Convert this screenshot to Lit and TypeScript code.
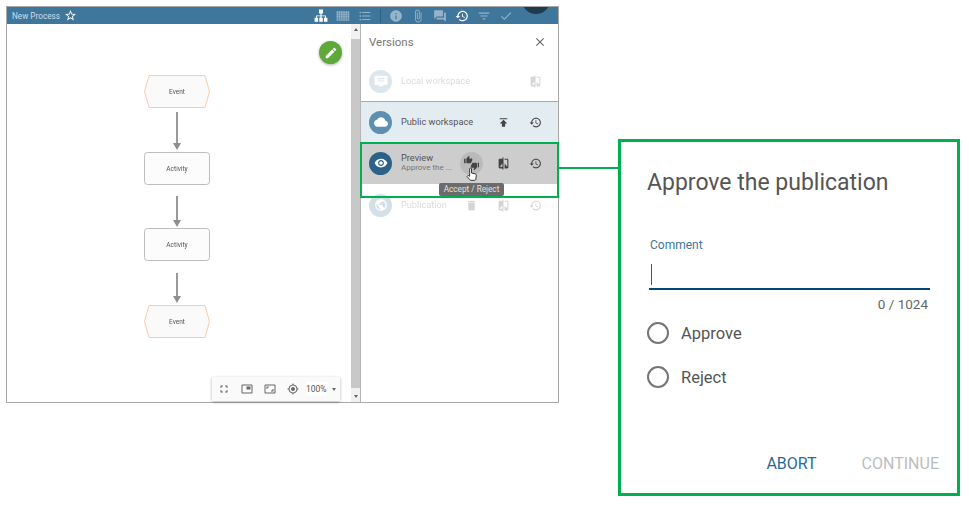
import { LitElement, html, css } from "lit";
import { customElement } from "lit/decorators.js";

const P = {
  star: "M22 9.24l-7.19-.62L12 2 9.19 8.63 2 9.24l5.46 4.73L5.82 21 12 17.27 18.18 21l-1.63-7.03L22 9.24zM12 15.4l-3.76 2.27 1-4.28-3.32-2.88 4.38-.38L12 6.1l1.71 4.04 4.38.38-3.32 2.88 1 4.28L12 15.4z",
  tree: "M8.5 1h7v6.5H13V11h7.5v4H23v7h-6v-7h2v-2.5h-6V15h2v7H9v-7h2v-2.5H5V15h2v7H1v-7h2.5v-4H11V7.5H8.5z",
  list: "M4 10.5c-.83 0-1.5.67-1.5 1.5s.67 1.5 1.5 1.5 1.5-.67 1.5-1.5-.67-1.5-1.5-1.5zm0-6c-.83 0-1.5.67-1.5 1.5S3.17 7.5 4 7.5 5.5 6.83 5.5 6 4.83 4.5 4 4.5zm0 12c-.83 0-1.5.68-1.5 1.5s.68 1.5 1.5 1.5 1.5-.68 1.5-1.5-.67-1.5-1.5-1.5zM7 19h14v-2H7v2zm0-6h14v-2H7v2zm0-8v2h14V5H7z",
  info: "M12 2C6.48 2 2 6.48 2 12s4.48 10 10 10 10-4.48 10-10S17.52 2 12 2zm1 15h-2v-6h2v6zm0-8h-2V7h2v2z",
  clip: "M16.5 6v11.5c0 2.21-1.79 4-4 4s-4-1.79-4-4V5c0-1.38 1.12-2.5 2.5-2.5s2.5 1.12 2.5 2.5v10.5c0 .55-.45 1-1 1s-1-.45-1-1V6H10v9.5c0 1.38 1.12 2.5 2.5 2.5s2.5-1.12 2.5-2.5V5c0-2.21-1.79-4-4-4S7 2.79 7 5v12.5c0 3.04 2.46 5.5 5.5 5.5s5.5-2.46 5.5-5.5V6h-1.5z",
  forum: "M21 6h-2v9H6v2c0 .55.45 1 1 1h11l4 4V7c0-.55-.45-1-1-1zm-4 6V3c0-.55-.45-1-1-1H3c-.55 0-1 .45-1 1v14l4-4h10c.55 0 1-.45 1-1z",
  history: "M13 3c-4.97 0-9 4.03-9 9H1l3.89 3.89.07.14L9 12H6c0-3.87 3.13-7 7-7s7 3.13 7 7-3.13 7-7 7c-1.93 0-3.68-.79-4.94-2.06l-1.42 1.42C8.27 19.99 10.51 21 13 21c4.97 0 9-4.03 9-9s-4.03-9-9-9zm-1 5v5l4.28 2.54.72-1.21-3.5-2.08V8H12z",
  filter: "M10 18h4v-2h-4v2zM3 6v2h18V6H3zm3 7h12v-2H6v2z",
  check: "M9 16.17L4.83 12l-1.42 1.41L9 19 21 7l-1.41-1.41z",
  close: "M19 6.41L17.59 5 12 10.59 6.41 5 5 6.41 10.59 12 5 17.59 6.41 19 12 13.41 17.59 19 19 17.59 13.41 12z",
  edit: "M3 17.25V21h3.75L17.81 9.94l-3.75-3.75L3 17.25zM20.71 7.04c.39-.39.39-1.02 0-1.41l-2.34-2.34c-.39-.39-1.02-.39-1.41 0l-1.83 1.83 3.75 3.75 1.83-1.83z",
  cloud: "M19.35 10.04C18.67 6.59 15.64 4 12 4 9.11 4 6.6 5.64 5.35 8.04 2.34 8.36 0 10.91 0 14c0 3.31 2.69 6 6 6h13c2.76 0 5-2.24 5-5 0-2.64-2.05-4.78-4.65-4.96z",
  eye: "M12 4.5C7 4.5 2.73 7.61 1 12c1.73 4.39 6 7.5 11 7.5s9.27-3.11 11-7.5c-1.73-4.39-6-7.5-11-7.5zM12 17c-2.76 0-5-2.24-5-5s2.24-5 5-5 5 2.24 5 5-2.24 5-5 5zm0-8c-1.66 0-3 1.34-3 3s1.34 3 3 3 3-1.34 3-3-1.34-3-3-3z",
  globe: "M12 2C6.48 2 2 6.48 2 12s4.48 10 10 10 10-4.48 10-10S17.52 2 12 2zm-1 17.93c-3.95-.49-7-3.85-7-7.93 0-.62.08-1.21.21-1.79L9 15v1c0 1.1.9 2 2 2v1.93zm6.9-2.54c-.26-.81-1-1.39-1.9-1.39h-1v-3c0-.55-.45-1-1-1H8v-2h2c.55 0 1-.45 1-1V7h2c1.1 0 2-.9 2-2v-.41c2.93 1.19 5 4.06 5 7.41 0 2.08-.8 3.97-2.1 5.39z",
  compare: "M10 3H5c-1.1 0-2 .9-2 2v14c0 1.1.9 2 2 2h5v2h2V1h-2v2zm0 15H5l5-6v6zm9-15h-5v2h5v13l-5-6v9h5c1.1 0 2-.9 2-2V5c0-1.1-.9-2-2-2z",
  publish: "M5 4v2h14V4H5zm0 10h4v6h6v-6h4l-7-7-7 7z",
  del: "M6 19c0 1.1.9 2 2 2h8c1.1 0 2-.9 2-2V7H6v12zM19 4h-3.5l-1-1h-5l-1 1H5v2h14V4z",
  notes: "M21 3H3a2 2 0 0 0-2 2v12a2 2 0 0 0 2 2h5v2h8v-2h5a2 2 0 0 0 2-2V5a2 2 0 0 0-2-2zM6 7h12v2H6zm0 4h12v2H6z",
  up: "M1 21h4V9H1v12zm22-11c0-1.1-.9-2-2-2h-6.31l.95-4.57.03-.32c0-.41-.17-.79-.44-1.06L14.17 1 7.59 7.59C7.22 7.95 7 8.45 7 9v10c0 1.1.9 2 2 2h9c.83 0 1.54-.5 1.8-1.22l3.02-7.05c.09-.23.18-.47.18-.73v-2z",
  down: "M15 3H6c-.83 0-1.54.5-1.84 1.22l-3.02 7.05c-.09.23-.14.47-.14.73v2c0 1.1.9 2 2 2h6.31l-.95 4.57-.03.32c0 .41.17.79.44 1.06L9.83 23l6.59-6.59c.36-.36.58-.86.58-1.41V5c0-1.1-.9-2-2-2zm4 0v12h4V3h-4z",
  full: "M7 14H5v5h5v-2H7v-3zm-2-4h2V7h3V5H5v5zm12 7h-3v2h5v-5h-2v3zM14 5v2h3v3h2V5h-5z",
  pip: "M19 7h-8v6h8V7zm2-4H3c-1.1 0-2 .9-2 2v14c0 1.1.9 1.98 2 1.98h18c1.1 0 2-.88 2-1.98V5c0-1.1-.9-2-2-2zm0 16.01H3V4.98h18v14.03z",
  aspect: "M19 12h-2v3h-3v2h5v-5zM7 9h3V7H5v5h2V9zm14-6H3c-1.1 0-2 .9-2 2v14c0 1.1.9 2 2 2h18c1.1 0 2-.9 2-2V5c0-1.1-.9-2-2-2zm0 16.01H3V4.99h18v14.02z",
  gps: "M12 8c-2.21 0-4 1.79-4 4s1.79 4 4 4 4-1.79 4-4-1.79-4-4-4zm8.94 3c-.46-4.17-3.77-7.48-7.94-7.94V1h-2v2.06C6.83 3.52 3.52 6.83 3.06 11H1v2h2.06c.46 4.17 3.77 7.48 7.94 7.94V23h2v-2.06c4.17-.46 7.48-3.77 7.94-7.94H23v-2h-2.06zM12 19c-3.87 0-7-3.13-7-7s3.13-7 7-7 7 3.13 7 7-3.13 7-7 7z",
  hand: "M9 11V3.5a1.5 1.5 0 0 1 3 0V10l6.5 1.6c1 .3 1.5 1.1 1.4 2.1l-.8 6.6c-.2 1-1 1.7-2 1.7H11c-.6 0-1.1-.2-1.5-.7L4.6 15.6l1-1c.5-.5 1.2-.6 1.8-.2L9 15.5z",
};

const gridPath = (() => {
  let d = "";
  for (let r = 0; r < 5; r++)
    for (let c = 0; c < 6; c++)
      d += `M${1 + c * 3.75} ${4 + r * 3.4}h3v2.7h-3z`;
  return d;
})();

const ic = (d: string, cls = "") =>
  html`<svg class="ic ${cls}" viewBox="0 0 24 24" aria-hidden="true"><path d=${d} fill-rule="evenodd"></path></svg>`;

const thumbs = html`<svg class="ic" viewBox="0 0 24 24" aria-hidden="true">
  <g transform="translate(-.5 -1) scale(.6)"><path d=${P.up}></path></g>
  <g transform="translate(10.5 9) scale(.6)"><path d=${P.down}></path></g>
</svg>`;

@customElement("app-root")
export class AppRoot extends LitElement {
  static styles = css`
    :host {
      display: block;
      position: relative;
      width: 969px;
      height: 505px;
      overflow: hidden;
      background: #fff;
      font-family: Roboto, "Liberation Sans", sans-serif;
    }
    .stage {
      display: flex;
      align-items: flex-start;
      padding: 6px 0 0 6px;
    }
    .ic {
      display: block;
      width: 14px;
      height: 14px;
      fill: currentColor;
      flex: none;
    }
    .window {
      position: relative;
      width: 553px;
      height: 397px;
      box-sizing: border-box;
      border: 1px solid #a8a8a8;
      display: flex;
      flex-direction: column;
      flex: none;
    }
    .bar {
      position: relative;
      height: 17px;
      flex: none;
      overflow: hidden;
      background: #3f779c;
      color: #fff;
      display: flex;
      align-items: center;
      padding: 0 45px 0 5px;
    }
    .bar .name {
      font-size: 8.2px;
      color: #cddde8;
      margin-right: 4px;
    }
    .bar .star { width: 13px; height: 13px; }
    .tools {
      margin-left: auto;
      display: flex;
      align-items: center;
      gap: 8px;
    }
    .tools .ic { color: rgba(255, 255, 255, .45); }
    .tools .on { color: #fff; }
    .tools .sep { width: 1px; height: 14px; background: #2c5f82; }
    .avatar {
      position: absolute;
      left: 515px;
      top: -21px;
      width: 28px;
      height: 28px;
      border-radius: 50%;
      background: #1f3a4d;
    }
    .body {
      flex: 1;
      min-height: 0;
      display: flex;
    }
    .canvas {
      position: relative;
      width: 344px;
      flex: none;
    }
    .canvas > svg.diagram {
      display: block;
      width: 344px;
      height: 379px;
    }
    .labels { filter: blur(.2px); }
    .fab {
      position: absolute;
      left: 312px;
      top: 17px;
      width: 23px;
      height: 23px;
      border-radius: 50%;
      background: #5ea83c;
      color: #fff;
      display: flex;
      align-items: center;
      justify-content: center;
      box-shadow: 0 1px 3px rgba(0, 0, 0, .3);
    }
    .zoombar {
      position: absolute;
      left: 205px;
      top: 353px;
      width: 128px;
      height: 24px;
      box-sizing: border-box;
      background: #fafafa;
      box-shadow: 0 1px 3px rgba(0, 0, 0, .3);
      display: flex;
      align-items: center;
      padding-left: 6px;
      gap: 11px;
      color: #666;
    }
    .zoombar .ic { width: 12px; height: 12px; }
    .zoombar .pct {
      font-size: 8.5px;
      color: #555;
      background: #fff;
      margin-left: -4px;
      padding: 2px 0;
    }
    .zoombar .caret {
      width: 0;
      height: 0;
      margin-left: -6px;
      border-left: 2.5px solid transparent;
      border-right: 2.5px solid transparent;
      border-top: 3px solid #666;
    }
    .scroll {
      width: 9px;
      flex: none;
      background: #f1f1f1;
      display: flex;
      flex-direction: column;
      align-items: center;
      border-right: 1px solid #b5b5b5;
    }
    .arrow {
      width: 0;
      height: 0;
      flex: none;
      border-left: 2px solid transparent;
      border-right: 2px solid transparent;
    }
    .arrow.u { margin: 4px 0 8px; border-bottom: 3px solid #666; }
    .arrow.d { margin: 7px 0 0; border-top: 3px solid #666; }
    .thumb {
      width: 100%;
      height: 349px;
      flex: none;
      background: #c8c8c8;
    }
    .panel {
      flex: 1;
      min-width: 0;
      display: flex;
      flex-direction: column;
    }
    .head {
      height: 37px;
      flex: none;
      box-sizing: border-box;
      display: flex;
      align-items: center;
      justify-content: space-between;
      padding: 0 11px 2px 8px;
      font-size: 11.5px;
      color: #777;
    }
    .head .ic { color: #666; width: 14px; height: 14px; }
    .row {
      position: relative;
      height: 40px;
      flex: none;
      box-sizing: border-box;
      display: flex;
      align-items: center;
      padding: 0 7px 0 8px;
      color: #444;
    }
    .row.local { border-bottom: 1px solid #aaa; height: 41px; }
    .row.public { background: #e3ecf1; }
    .row.preview { background: #cdcdcd; height: 42px; }
    .row.pub { height: 42px; }
    .faded { opacity: .22; }
    .disc {
      width: 23px;
      height: 23px;
      border-radius: 50%;
      flex: none;
      background: #5f8fb0;
      color: #fff;
      display: flex;
      align-items: center;
      justify-content: center;
      margin-right: 9px;
    }
    .disc.dark { background: #2c6288; }
    .disc.mid { background: #3f779c; }
    .label {
      flex: 1;
      min-width: 0;
      font-size: 9.2px;
      line-height: 10px;
      color: #555;
    }
    .label small {
      display: block;
      font-size: 8px;
      color: #777;
    }
    .acts { display: flex; }
    .act {
      position: relative;
      width: 32px;
      height: 23px;
      display: flex;
      align-items: center;
      justify-content: center;
      color: #444;
    }
    .act .ic { width: 13px; height: 13px; }
    .act.hover::before {
      content: "";
      position: absolute;
      left: 4.5px;
      top: 0;
      width: 23px;
      height: 23px;
      border-radius: 50%;
      background: #bababa;
    }
    .act.hover .ic { position: relative; width: 15px; height: 15px; }
    .hand {
      position: absolute;
      left: 459px;
      top: 160px;
      z-index: 4;
      width: 11px;
      height: 15px;
      fill: #fff;
      stroke: #333;
      stroke-width: 1.6;
    }
    .tip {
      position: absolute;
      left: 432px;
      top: 176px;
      z-index: 3;
      width: 65px;
      height: 13px;
      border-radius: 2px;
      background: #6b6b6b;
      color: #e2e2e2;
      font-size: 8.2px;
      line-height: 13px;
      text-align: center;
    }
    .mark {
      position: absolute;
      left: 353px;
      top: 135px;
      z-index: 2;
      width: 199px;
      height: 56px;
      box-sizing: border-box;
      border: 2px solid #00b050;
    }
    .link {
      position: absolute;
      left: 552px;
      top: 160px;
      width: 59px;
      height: 2px;
      background: #00b050;
    }
    .callout {
      flex: none;
      width: 342px;
      height: 357px;
      box-sizing: border-box;
      margin: 133px 0 0 59px;
      border: 3px solid #00b050;
      padding: 28px 27px 0 26px;
      display: flex;
      flex-direction: column;
      color: #555;
    }
    .title {
      font-size: 23px;
      line-height: 26px;
      color: #555;
    }
    .field-label {
      margin: 42px 0 0 3px;
      font-size: 12px;
      line-height: 14px;
      color: #3f779c;
    }
    .input {
      margin: 11px 0 0 2px;
      height: 25px;
      border-bottom: 2px solid #00497a;
      padding-left: 2px;
      display: flex;
    }
    .caretbar {
      width: 1px;
      height: 21px;
      margin-top: 1px;
      background: #555;
    }
    .count {
      margin-top: 6px;
      padding-right: 2px;
      font-size: 13.5px;
      line-height: 16px;
      color: #666;
      text-align: right;
    }
    .radio {
      display: flex;
      align-items: center;
      gap: 12px;
      height: 44px;
      font-size: 16.5px;
      color: #555;
    }
    .radios { margin-top: -1px; }
    .dot {
      width: 22px;
      height: 22px;
      box-sizing: border-box;
      border: 2px solid #757575;
      border-radius: 50%;
      flex: none;
    }
    .btns {
      margin-top: auto;
      margin-bottom: 20px;
      margin-right: -9px;
      display: flex;
      justify-content: flex-end;
      gap: 45px;
      font-size: 16px;
      line-height: 18px;
    }
    .btns .a { color: #2a6a96; }
    .btns .b { color: #bdbdbd; }
  `;

  render() {
    return html`
      <div class="stage">
        <div class="window">
          <div class="bar">
            <span class="name">New Process</span>
            ${ic(P.star, "star")}
            <div class="tools">
              ${ic(P.tree, "on")} ${ic(gridPath)} ${ic(P.list)}
              <span class="sep"></span>
              ${ic(P.info)} ${ic(P.clip)} ${ic(P.forum)} ${ic(P.history, "on")} ${ic(P.filter)} ${ic(P.check)}
            </div>
            <span class="avatar"></span>
          </div>
          <div class="body">
            <div class="canvas">
              <svg class="diagram" viewBox="7 24 344 379" aria-hidden="true" font-family="Roboto, sans-serif">
                <g fill="#fafafa" stroke="#fbcbab">
                  <polygon points="149,75.5 205,75.5 209.5,91.5 205,107.5 149,107.5 144.5,91.5"></polygon>
                  <polygon points="149,305.5 205,305.5 209.5,321.5 205,337.5 149,337.5 144.5,321.5"></polygon>
                </g>
                <g fill="#fcfcfc" stroke="#bdbdbd">
                  <rect x="144.5" y="152.5" width="65" height="32" rx="3"></rect>
                  <rect x="144.5" y="228.5" width="65" height="32" rx="3"></rect>
                </g>
                <g class="labels" fill="#555" font-size="6.5" text-anchor="middle">
                  <text x="177" y="94">Event</text>
                  <text x="177" y="170.5">Activity</text>
                  <text x="177" y="247">Activity</text>
                  <text x="177" y="323.5">Event</text>
                </g>
                <g stroke="#999" stroke-width="2">
                  <line x1="177" y1="112" x2="177" y2="144"></line>
                  <line x1="177" y1="196" x2="177" y2="221"></line>
                  <line x1="177" y1="273" x2="177" y2="298"></line>
                </g>
                <g fill="#8f8f8f">
                  <polygon points="173,143 181,143 177,150"></polygon>
                  <polygon points="173,220 181,220 177,227"></polygon>
                  <polygon points="173,296 181,296 177,303"></polygon>
                </g>
                ${[185, 261].map(
                  (y) => html`
                    <g fill="#aaa">
                      <rect x="161" y=${y + 1} width="2" height="1.5"></rect>
                      <rect x="161" y=${y + 3} width="2" height="3"></rect>
                      <rect x="160" y=${y + 6} width="4" height="1"></rect>
                      <rect x="174.5" y=${y + 2.5} width="6" height="2.6" transform="rotate(45 177.5 ${y + 3.8})"></rect>
                      <rect x="189.5" y=${y + 1} width="3" height="2"></rect>
                      <rect x="186.5" y=${y + 3.5} width="9" height="1"></rect>
                      <rect x="186" y=${y + 5} width="2.5" height="2"></rect>
                      <rect x="189.8" y=${y + 5} width="2.5" height="2"></rect>
                      <rect x="193.5" y=${y + 5} width="2.5" height="2"></rect>
                    </g>
                  `
                )}
              </svg>
              <div class="fab">${ic(P.edit)}</div>
              <div class="zoombar">
                ${ic(P.full)} ${ic(P.pip)} ${ic(P.aspect)} ${ic(P.gps)}
                <span class="pct">100%</span>
                <span class="caret"></span>
              </div>
            </div>
            <div class="scroll">
              <span class="arrow u"></span>
              <span class="thumb"></span>
              <span class="arrow d"></span>
            </div>
            <div class="panel">
              <div class="head"><span>Versions</span>${ic(P.close)}</div>
              <div class="row local">
                <span class="disc faded">${ic(P.notes)}</span>
                <span class="label faded">Local workspace</span>
                <span class="acts faded"><span class="act">${ic(P.compare)}</span></span>
              </div>
              <div class="row public">
                <span class="disc">${ic(P.cloud)}</span>
                <span class="label">Public workspace</span>
                <span class="acts">
                  <span class="act">${ic(P.publish)}</span>
                  <span class="act">${ic(P.history)}</span>
                </span>
              </div>
              <div class="row preview">
                <span class="disc dark">${ic(P.eye)}</span>
                <span class="label">Preview<small>Approve the ...</small></span>
                <span class="acts">
                  <span class="act hover">${thumbs}</span>
                  <span class="act">${ic(P.compare)}</span>
                  <span class="act">${ic(P.history)}</span>
                </span>
              </div>
              <div class="row pub faded">
                <span class="disc mid">${ic(P.globe)}</span>
                <span class="label">Publication</span>
                <span class="acts">
                  <span class="act">${ic(P.del)}</span>
                  <span class="act">${ic(P.compare)}</span>
                  <span class="act">${ic(P.history)}</span>
                </span>
              </div>
            </div>
          </div>
          <svg class="hand" viewBox="3 1 18 23" aria-hidden="true"><path d=${P.hand}></path></svg>
          <div class="mark"></div>
          <div class="tip">Accept / Reject</div>
          <div class="link"></div>
        </div>
        <div class="callout">
          <div class="title">Approve the publication</div>
          <div class="field-label">Comment</div>
          <div class="input"><span class="caretbar"></span></div>
          <div class="count">0 / 1024</div>
          <div class="radios">
            <div class="radio"><span class="dot"></span>Approve</div>
            <div class="radio"><span class="dot"></span>Reject</div>
          </div>
          <div class="btns"><span class="a">ABORT</span><span class="b">CONTINUE</span></div>
        </div>
      </div>
    `;
  }
}
